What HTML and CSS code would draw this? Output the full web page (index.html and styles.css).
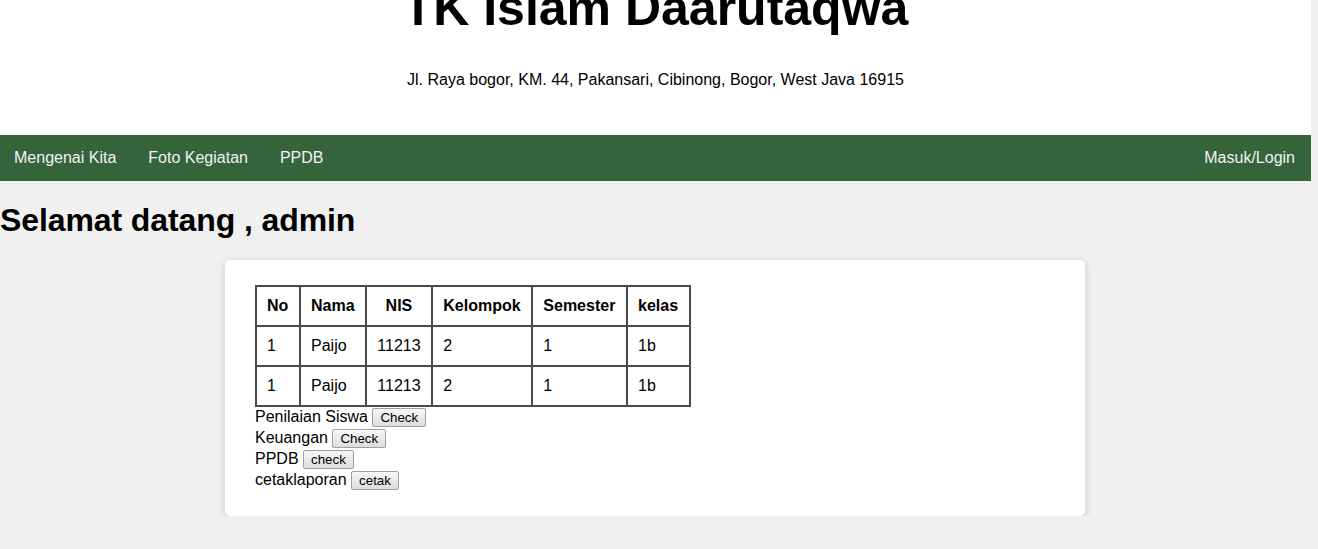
FILE: index.html
```html
<!DOCTYPE html>
<html lang="id">
<head>
<meta charset="utf-8">
<title>TK Islam Daarutaqwa</title>
<link rel="stylesheet" href="styles.css">
</head>
<body>
<header class="header">
  <h1 class="site-title">TK Islam Daarutaqwa</h1>
  <p class="address">Jl. Raya bogor, KM. 44, Pakansari, Cibinong, Bogor, West Java 16915</p>
</header>
<nav class="navbar">
  <div class="nav-left">
    <a href="#">Mengenai Kita</a>
    <a href="#">Foto Kegiatan</a>
    <a href="#">PPDB</a>
  </div>
  <div class="nav-right">
    <a href="#">Masuk/Login</a>
  </div>
</nav>
<main class="main">
  <h1 class="welcome">Selamat datang , admin</h1>
  <div class="card">
    <table class="data-table">
      <tr><th>No</th><th>Nama</th><th>NIS</th><th>Kelompok</th><th>Semester</th><th>kelas</th></tr>
      <tr><td>1</td><td>Paijo</td><td>11213</td><td>2</td><td>1</td><td>1b</td></tr>
      <tr><td>1</td><td>Paijo</td><td>11213</td><td>2</td><td>1</td><td>1b</td></tr>
    </table>
    <div class="actions">
      <div class="action">Penilaian Siswa <button class="btn">Check</button></div>
      <div class="action">Keuangan <button class="btn">Check</button></div>
      <div class="action">PPDB <button class="btn">check</button></div>
      <div class="action">cetaklaporan <button class="btn">cetak</button></div>
    </div>
  </div>
</main>
</body>
</html>
```

FILE: styles.css
```css
html, body {
  margin: 0;
  padding: 0;
}
body {
  background: #f0f0f0;
  font-family: "Liberation Sans", Arial, sans-serif;
  font-size: 16px;
  color: #000;
  overflow: hidden;
}
.header {
  width: 1311px;
  height: 135px;
  background: #fff;
  text-align: center;
  box-sizing: border-box;
  overflow: hidden;
}
.site-title {
  margin: -21px 0 0;
  font-size: 50px;
  font-weight: bold;
}
.address {
  margin: 34px 0 0;
  font-size: 16px;
}
.navbar {
  width: 1311px;
  background: #35643a;
  display: flex;
  justify-content: space-between;
}
.nav-left {
  display: flex;
  margin-left: -2px;
}
.nav-right {
  display: flex;
}
.navbar a {
  display: block;
  padding: 14px 16px;
  color: #f2f2f2;
  text-decoration: none;
  font-size: 16px;
  line-height: 18px;
}
.main {
  width: 1310px;
}
.welcome {
  margin: 21px 0;
  font-size: 32px;
  font-weight: bold;
  letter-spacing: -0.1px;
}
.card {
  width: 860px;
  margin: 0 auto;
  box-sizing: border-box;
  background: #fff;
  border-radius: 5px;
  padding: 25px 30px 26px;
  box-shadow: 0 2px 8px rgba(0, 0, 0, 0.16);
}
.data-table {
  border-collapse: collapse;
  border: 2px solid #4a4a4a;
}
.data-table th,
.data-table td {
  border: 2px solid #4a4a4a;
  padding: 10px 10.7px 10px 10px;
  line-height: 18px;
}
.data-table th {
  text-align: center;
  font-weight: bold;
}
.data-table td {
  text-align: left;
}
.actions {
  margin-top: -1px;
}
.action {
  line-height: 21px;
}
.btn {
  font-family: "Liberation Sans", Arial, sans-serif;
  font-size: 13.333px;
  padding: 1px 7px;
  border: 1px solid #a0a0a0;
  border-radius: 2px;
  background: linear-gradient(#f7f7f7, #dddddd);
  color: #000;
  line-height: 15px;
  vertical-align: baseline;
}
```
